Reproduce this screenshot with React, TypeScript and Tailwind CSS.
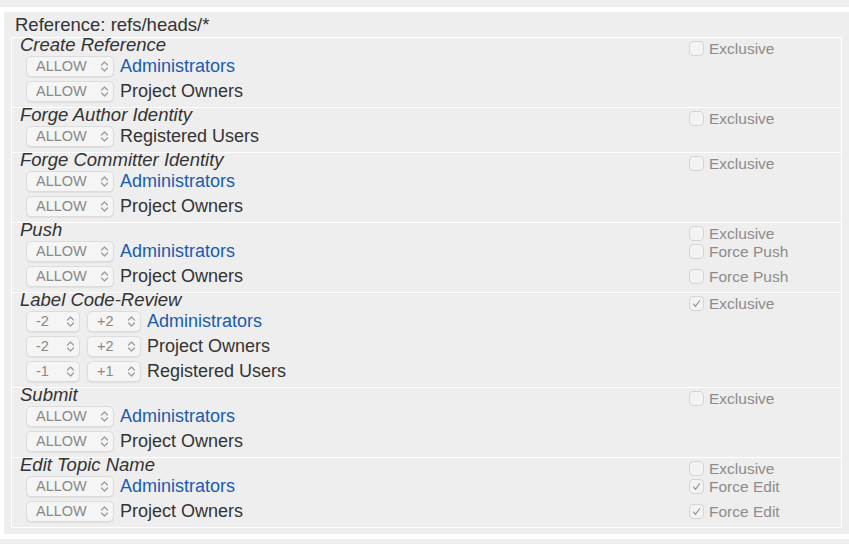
import type { ReactNode } from 'react';

type Rule = {
  values: string[];
  group: string;
  link?: boolean;
  force?: { label: string; checked: boolean };
};

type Section = {
  name: string;
  exclusive: boolean;
  rules: Rule[];
};

const sections: Section[] = [
  {
    name: 'Create Reference',
    exclusive: false,
    rules: [
      { values: ['ALLOW'], group: 'Administrators', link: true },
      { values: ['ALLOW'], group: 'Project Owners' },
    ],
  },
  {
    name: 'Forge Author Identity',
    exclusive: false,
    rules: [{ values: ['ALLOW'], group: 'Registered Users' }],
  },
  {
    name: 'Forge Committer Identity',
    exclusive: false,
    rules: [
      { values: ['ALLOW'], group: 'Administrators', link: true },
      { values: ['ALLOW'], group: 'Project Owners' },
    ],
  },
  {
    name: 'Push',
    exclusive: false,
    rules: [
      { values: ['ALLOW'], group: 'Administrators', link: true, force: { label: 'Force Push', checked: false } },
      { values: ['ALLOW'], group: 'Project Owners', force: { label: 'Force Push', checked: false } },
    ],
  },
  {
    name: 'Label Code-Review',
    exclusive: true,
    rules: [
      { values: ['-2', '+2'], group: 'Administrators', link: true },
      { values: ['-2', '+2'], group: 'Project Owners' },
      { values: ['-1', '+1'], group: 'Registered Users' },
    ],
  },
  {
    name: 'Submit',
    exclusive: false,
    rules: [
      { values: ['ALLOW'], group: 'Administrators', link: true },
      { values: ['ALLOW'], group: 'Project Owners' },
    ],
  },
  {
    name: 'Edit Topic Name',
    exclusive: false,
    rules: [
      { values: ['ALLOW'], group: 'Administrators', link: true, force: { label: 'Force Edit', checked: true } },
      { values: ['ALLOW'], group: 'Project Owners', force: { label: 'Force Edit', checked: true } },
    ],
  },
];

function Chevrons() {
  return (
    <svg width="9" height="13" viewBox="0 0 9 13" fill="none" stroke="#9a9a9a" strokeWidth="1.2" strokeLinecap="round" strokeLinejoin="round">
      <path d="M1.5 5 L4.5 2 L7.5 5" />
      <path d="M1.5 8 L4.5 11 L7.5 8" />
    </svg>
  );
}

function Select({ value, narrow }: { value: string; narrow: boolean }) {
  return (
    <div
      className={`flex h-[21px] items-center justify-between rounded-[5px] border border-[#dcdcdc] bg-[#f5f5f5] pl-[9px] pr-[4px] shadow-[0_1px_1px_rgba(0,0,0,0.06)] ${
        narrow ? 'w-[54px]' : 'w-[88px]'
      }`}
    >
      <span className="text-[14.5px] leading-none text-[#888]">{value}</span>
      <Chevrons />
    </div>
  );
}

function Checkbox({ checked, children }: { checked: boolean; children: ReactNode }) {
  return (
    <label className="flex items-center gap-[5px] text-[15.5px] leading-[19px] text-[#8c8c8c]">
      <span className="flex h-[15px] w-[15px] items-center justify-center rounded-[4px] border border-[#d4d4d4] bg-[#f3f3f3]">
        {checked && (
          <svg width="9" height="9" viewBox="0 0 9 9" fill="none" stroke="#8a8a8a" strokeWidth="1.1" strokeLinecap="round" strokeLinejoin="round">
            <path d="M1.5 5 L3.6 7.3 L7.5 1.8" />
          </svg>
        )}
      </span>
      {children}
    </label>
  );
}

function PermissionSection({ section }: { section: Section }) {
  return (
    <div className="border-t border-white pb-[3px]">
      {/* Title row */}
      <div className="flex h-[16px]">
        <div className="flex-1 pl-[8px] text-[18.5px] italic leading-[14px] text-[#333]">{section.name}</div>
        <div className="w-[152px] pt-[1px]">
          <Checkbox checked={section.exclusive}>Exclusive</Checkbox>
        </div>
      </div>

      {/* Rules */}
      {section.rules.map((rule, i) => (
        <div key={i} className="flex h-[25px] items-center">
          <div className="flex flex-1 items-center pl-[14px]">
            <div className="flex gap-[7px]">
              {rule.values.map((v, j) => (
                <Select key={j} value={v} narrow={rule.values.length > 1} />
              ))}
            </div>
            <span className={`ml-[6px] text-[18px] ${rule.link ? 'text-[#1a5bb0]' : 'text-[#333]'}`}>{rule.group}</span>
          </div>
          <div className="w-[152px]">
            {rule.force && <Checkbox checked={rule.force.checked}>{rule.force.label}</Checkbox>}
          </div>
        </div>
      ))}
    </div>
  );
}

export default function App() {
  return (
    <div className="min-h-screen bg-white font-['Liberation_Sans',Arial,sans-serif]">
      {/* tail of the previous reference block */}
      <div className="h-[7px] bg-[#eeeeee]" />

      <div className="ml-[4px] mt-[5px] bg-[#eeeeee] px-[7px] pb-[6px] pt-[2px]">
        <div className="h-[23px] pl-[4px] text-[18.5px] leading-[21px] text-[#333]">Reference: refs/heads/*</div>
        <div className="border-x border-b border-white">
          {sections.map((s) => (
            <PermissionSection key={s.name} section={s} />
          ))}
        </div>
      </div>

      <div className="mt-[5px] h-[20px] bg-[#eeeeee]" />
    </div>
  );
}
